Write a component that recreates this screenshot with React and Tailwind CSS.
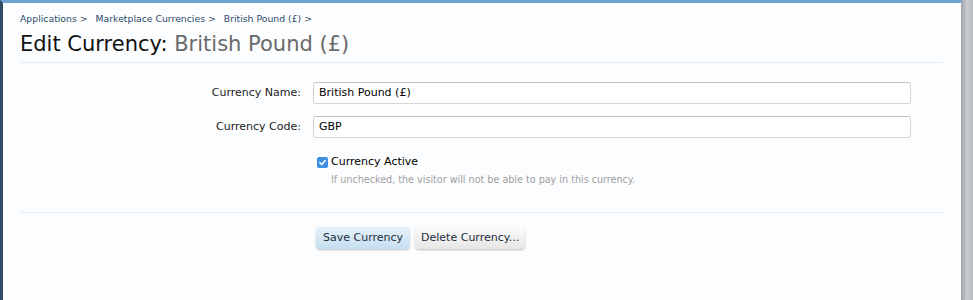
export default function App() {
  const font = { fontFamily: '"DejaVu Sans", Verdana, sans-serif' };
  return (
    <div className="w-[973px] h-[300px] flex bg-[#fcfdfe] overflow-hidden" style={font}>
      <div className="flex-1 flex flex-col border-t-[3px] border-t-[#6ea2d0] border-l-[3px] border-l-[#2f4a66]">
        <div className="pl-[17px] pr-[18px]">
          <div className="pt-[9px] flex gap-[8px] text-[9.3px] text-[#2b4a6a] leading-[14px]">
            <span>Applications &gt;</span>
            <span>Marketplace Currencies &gt;</span>
            <span>British Pound (£) &gt;</span>
          </div>
          <h1 className="mt-[5px] text-[21px] leading-[26px] text-[#111]">
            Edit Currency: <span className="text-[#6a6a6a]">British Pound (£)</span>
          </h1>
          <div className="mt-[5px] h-px bg-[#e3edf3]"></div>

          <div className="pt-[19px] flex flex-col gap-[12px]">
            <div className="flex items-center">
              <div className="w-[281px] text-right text-[11px] text-[#222]">Currency Name:</div>
              <div className="ml-[12px] w-[598px] h-[22px] bg-white border border-[#d6d6d6] border-t-[#c4c4c4] rounded-[3px] px-[5px] flex items-center text-[11px] text-black">British Pound (£)</div>
            </div>
            <div className="flex items-center">
              <div className="w-[281px] text-right text-[11px] text-[#222]">Currency Code:</div>
              <div className="ml-[12px] w-[598px] h-[22px] bg-white border border-[#d6d6d6] border-t-[#c4c4c4] rounded-[3px] px-[5px] flex items-center text-[11px] text-black">GBP</div>
            </div>
            <div className="pl-[297px] pt-[4px]">
              <div className="flex items-center gap-[3px] text-[11px] text-black">
                <span className="w-[11px] h-[11px] rounded-[2px] bg-[#3b8ee0] flex items-center justify-center">
                  <svg width="9" height="9" viewBox="0 0 10 10"><path d="M2 5.2 L4.2 7.3 L8 2.8" fill="none" stroke="white" strokeWidth="1.7" strokeLinecap="round" strokeLinejoin="round"/></svg>
                </span>
                <span>Currency Active</span>
              </div>
              <div className="pl-[14px] mt-[2px] text-[9.6px] text-[#a0a0a0]">If unchecked, the visitor will not be able to pay in this currency.</div>
            </div>
          </div>
          <div className="mt-[25px] h-px bg-[#e3edf3]"></div>
          <div className="pl-[296px] pt-[14px] flex gap-[5px] text-[11px]">
            <button className="h-[22px] px-[7px] rounded-[4px] bg-gradient-to-b from-[#e6f2fa] to-[#c6def0] text-[#1c2e40] shadow-[0_1px_2px_rgba(0,0,0,0.25)]">Save Currency</button>
            <button className="h-[22px] px-[6px] rounded-[4px] bg-gradient-to-b from-[#fbfbfb] to-[#e6e6e6] text-[#1c2e40] shadow-[0_1px_2px_rgba(0,0,0,0.25)]">Delete Currency...</button>
          </div>
        </div>
      </div>
      <div className="w-[12px] h-full bg-gradient-to-r from-[#9ea3a8] via-[#c8ccd0] to-[#b8bcc0]"></div>
    </div>
  );
}
